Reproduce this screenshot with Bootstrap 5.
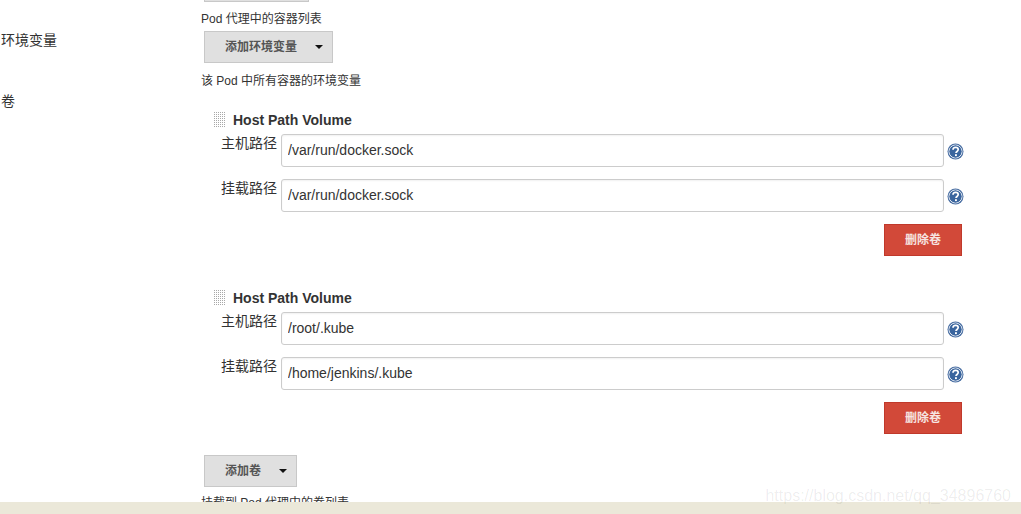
<!DOCTYPE html>
<html lang="zh-CN">
<head>
<meta charset="utf-8">
<title>Pod</title>
<link href="https://cdn.jsdelivr.net/npm/bootstrap@5.3.0/dist/css/bootstrap.min.css" rel="stylesheet">
<style>
html,body{height:514px;overflow:hidden;background:#fff}
body{position:relative;font-family:"Liberation Sans","Noto Sans CJK SC",sans-serif;font-size:14px;color:#333}
.page-shell{height:514px;overflow:hidden}
.side-col{width:201px;flex:none;padding-top:31px}
.side-label{font-size:14px;line-height:18px;color:#333;padding-left:1px}
.side-label.first{height:61px}
.main-col{flex:1;min-width:0}
.top-sliver{width:105px;height:2px;margin-left:3px;background:#e0e0e0;border:1px solid #c8c8c8;border-top:0}
.hint{font-size:12px;line-height:16px;color:#333}
.hint-a{margin-top:9px}
.hint-b{margin-top:10px}
.hint-c{margin-top:8px}
.drop-btn{background:#e0e0e0;border:1px solid #c8c8c8;border-radius:0;color:#555;font-size:12px;font-weight:700;height:32px;padding:0;display:flex;align-items:center;margin-left:3px}
.drop-btn:hover{background:#e0e0e0;border-color:#c8c8c8;color:#555}
.drop-env{width:129px;margin-top:4px;padding-left:20px}
.drop-vol{width:93px;margin-top:21px;padding-left:20px}
.caret-mark{width:0;height:0;border-left:4px solid transparent;border-right:4px solid transparent;border-top:4px solid #111;margin-left:auto;margin-right:9px}
.vol-block{margin-left:13px;width:751px}
.vol-one{margin-top:21px}
.vol-two{margin-top:32px}
.vol-head{height:20px;margin-bottom:4px;align-items:center}
.grip{width:12px;height:16px;flex:none;background:conic-gradient(#fff 0 75%,#a8a8a8 0) 0 0/2px 2px;margin-right:7px}
.vol-title{font-size:14px;font-weight:700;color:#333;line-height:16px}
.field-row{height:33px;margin-bottom:12px}
.field-name{width:63px;flex:none;text-align:right;font-size:14px;line-height:18px;color:#333;margin-right:4px;align-self:flex-start}
.field-box{flex:none;width:663px;height:33px;border:1px solid #ccc;border-radius:3px;box-shadow:inset 0 1px 2px rgba(0,0,0,.06);font-size:14px;color:#333;padding:0 6px 2px;font-family:"Liberation Sans","Noto Sans CJK SC",sans-serif}
.field-box:focus{border-color:#ccc;box-shadow:inset 0 1px 2px rgba(0,0,0,.06)}
.help-mark{width:17px;height:17px;flex:none;margin-left:3px;margin-top:9px;align-self:flex-start}
.del-wrap{width:748px;justify-content:flex-end}
.del-btn{width:78px;height:32px;padding:0 0 1px;background:#d24939;border:1px solid #c0392b;border-radius:0;color:#f6e4e0;font-size:12px;font-weight:700}
.del-btn:hover{background:#d24939;border-color:#c0392b;color:#f6e4e0}
.foot-bar{position:absolute;left:0;right:0;bottom:0;height:12px;background:#ebe8d9}
.mark-water{position:absolute;right:10px;top:487px;font-size:16px;line-height:18px;color:rgba(0,0,0,.08);z-index:2}
</style>
</head>
<body>
<div class="page-shell d-flex">
  <div class="side-col">
    <div class="side-label first">环境变量</div>
    <div class="side-label">卷</div>
  </div>
  <div class="main-col">
    <div class="top-sliver"></div>
    <div class="hint hint-a">Pod 代理中的容器列表</div>
    <button type="button" class="btn drop-btn drop-env"><span>添加环境变量</span><span class="caret-mark"></span></button>
    <div class="hint hint-b">该 Pod 中所有容器的环境变量</div>

    <div class="vol-block vol-one">
      <div class="d-flex vol-head"><span class="grip"></span><span class="vol-title">Host Path Volume</span></div>
      <div class="d-flex field-row"><label class="field-name">主机路径</label><input class="form-control field-box" value="/var/run/docker.sock"><svg class="help-mark" viewBox="0 0 17 17"><use href="#helpicon"/></svg></div>
      <div class="d-flex field-row"><label class="field-name">挂载路径</label><input class="form-control field-box" value="/var/run/docker.sock"><svg class="help-mark" viewBox="0 0 17 17"><use href="#helpicon"/></svg></div>
      <div class="d-flex del-wrap"><button type="button" class="btn del-btn">删除卷</button></div>
    </div>

    <div class="vol-block vol-two">
      <div class="d-flex vol-head"><span class="grip"></span><span class="vol-title">Host Path Volume</span></div>
      <div class="d-flex field-row"><label class="field-name">主机路径</label><input class="form-control field-box" value="/root/.kube"><svg class="help-mark" viewBox="0 0 17 17"><use href="#helpicon"/></svg></div>
      <div class="d-flex field-row"><label class="field-name">挂载路径</label><input class="form-control field-box" value="/home/jenkins/.kube"><svg class="help-mark" viewBox="0 0 17 17"><use href="#helpicon"/></svg></div>
      <div class="d-flex del-wrap"><button type="button" class="btn del-btn">删除卷</button></div>
    </div>

    <button type="button" class="btn drop-btn drop-vol"><span>添加卷</span><span class="caret-mark"></span></button>
    <div class="hint hint-c">挂载到 Pod 代理中的卷列表</div>
  </div>
</div>
<div class="foot-bar"></div>
<div class="mark-water">https://blog.csdn.net/qq_34896760</div>
<svg width="0" height="0" class="d-block position-absolute">
  <defs>
    <g id="helpicon">
      <circle cx="8.5" cy="8.5" r="8" fill="#4a6fa3"/>
      <circle cx="8.5" cy="8.5" r="6.5" fill="none" stroke="#e6ecf4" stroke-width="1"/>
      <circle cx="8.5" cy="8.5" r="5.9" fill="#3a659e"/>
      <path d="M6 6.7c0-1.5 1.2-2.3 2.6-2.3s2.6.8 2.6 2.2c0 1.9-2.2 1.8-2.2 3.5" fill="none" stroke="#fff" stroke-width="1.7"/>
      <rect x="8" y="11.2" width="1.9" height="1.9" fill="#fff"/>
    </g>
  </defs>
</svg>
</body>
</html>
